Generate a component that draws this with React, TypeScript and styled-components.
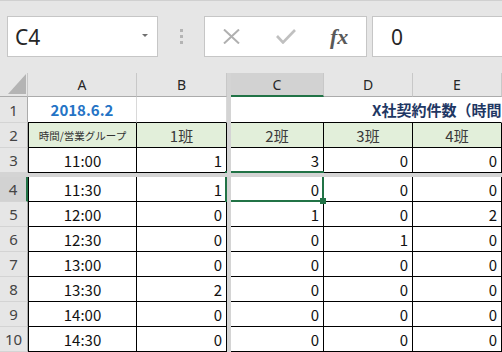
import React from 'react';
import styled, { createGlobalStyle } from 'styled-components';

const GREEN = '#217346';

const GlobalStyle = createGlobalStyle`
  html, body { margin: 0; padding: 0; }
  body {
    background: #e6e6e6;
    font-family: "Noto Sans CJK JP", "Noto Sans", sans-serif;
  }
  #root { width: 502px; height: 352px; overflow: hidden; }
`;

const Window = styled.div`
  width: 502px;
  height: 352px;
  display: flex;
  flex-direction: column;
  background: #e6e6e6;
  overflow: hidden;
`;

/* ---------- formula bar ---------- */

const FormulaBar = styled.div`
  flex: 0 0 73px;
  box-sizing: border-box;
  border-top: 1px solid #d0d0d0;
  padding: 15px 0 16px 7px;
  display: flex;
`;

const Box = styled.div`
  box-sizing: border-box;
  height: 41px;
  background: #fff;
  border: 1px solid #c6c6c6;
  display: flex;
  align-items: center;
`;

const NameBox = styled(Box)`
  width: 151px;
  padding: 0 9px 0 7px;
  font-family: "Noto Sans", sans-serif;
  font-size: 21px;
  color: #262626;
`;

const DropArrow = styled.span`
  margin-left: auto;
  margin-bottom: 3px;
  width: 0;
  height: 0;
  border-left: 3px solid transparent;
  border-right: 3px solid transparent;
  border-top: 3px solid #707070;
`;

const Grip = styled.div`
  width: 46px;
  display: flex;
  flex-direction: column;
  align-items: center;
  justify-content: center;
  gap: 3px;
`;

const GripDot = styled.span`
  width: 3px;
  height: 3px;
  background: #b4b4b4;
`;

const ActionBox = styled(Box)`
  width: 163px;
`;

const ActionButton = styled.div`
  flex: 1;
  height: 100%;
  display: flex;
  align-items: center;
  justify-content: center;
`;

const FxLabel = styled.span`
  font-family: "Liberation Serif", serif;
  font-style: italic;
  font-weight: bold;
  font-size: 22px;
  color: #595959;
`;

const FormulaInput = styled(Box)`
  flex: 1;
  margin: 0 -3px 0 5px;
  padding-left: 18px;
  font-family: "Noto Sans", sans-serif;
  font-size: 21px;
  color: #262626;
`;

/* ---------- sheet ---------- */

const Sheet = styled.div`
  position: relative;
  flex: 1;
  display: grid;
  grid-template-columns: 28px 109px 90px 4px 93px 89px 1fr;
  grid-template-rows: 24px 26px 25px 25px 4px repeat(7, 25px);
  background: #fff;
`;

const Corner = styled.div`
  box-sizing: border-box;
  background: #e6e6e6;
  border-right: 1px solid #c8c8c8;
  border-bottom: 1px solid #ababab;
  display: flex;
  align-items: flex-end;
  justify-content: flex-end;
  padding: 0 1px 2px 0;
`;

const CornerTriangle = styled.span`
  width: 0;
  height: 0;
  border-left: 18px solid transparent;
  border-bottom: 20px solid #b4b4b4;
`;

const ColHeader = styled.div<{ $active?: boolean }>`
  box-sizing: border-box;
  display: flex;
  align-items: center;
  justify-content: center;
  font-family: "Noto Sans", sans-serif;
  font-size: 14px;
  color: #262626;
  background: ${p => (p.$active ? '#d2d2d2' : '#e6e6e6')};
  border-right: 1px solid #c8c8c8;
  border-bottom: ${p => (p.$active ? `2px solid ${GREEN}` : '1px solid #ababab')};
`;

const RowHeader = styled.div<{ $active?: boolean }>`
  box-sizing: border-box;
  display: flex;
  align-items: center;
  justify-content: center;
  font-family: "Noto Sans", sans-serif;
  font-size: 15px;
  color: #444;
  background: ${p => (p.$active ? '#d2d2d2' : '#e6e6e6')};
  border-right: ${p => (p.$active ? `2px solid ${GREEN}` : '1px solid #ababab')};
  border-bottom: 1px solid #d4d4d4;
`;

type Edge = 'black' | 'grid' | 'none';
const line = (e?: Edge) => (e === 'black' ? '#000' : e === 'grid' ? '#d9d9d9' : 'transparent');

const Cell = styled.div<{
  $align?: 'left' | 'center' | 'right';
  $right?: Edge;
  $bottom?: Edge;
  $left?: Edge;
  $fill?: string;
  $span?: number;
}>`
  box-sizing: border-box;
  display: flex;
  align-items: center;
  justify-content: ${p => (p.$align === 'right' ? 'flex-end' : p.$align === 'left' ? 'flex-start' : 'center')};
  padding: 0 4px;
  font-size: 15px;
  color: #111;
  white-space: nowrap;
  overflow: hidden;
  background: ${p => p.$fill ?? '#fff'};
  border-right: 1px solid ${p => line(p.$right)};
  border-bottom: 1px solid ${p => line(p.$bottom)};
  border-left: ${p => (p.$left ? `1px solid ${line(p.$left)}` : 'none')};
  grid-column: ${p => (p.$span ? `span ${p.$span}` : 'auto')};
`;

const DateCell = styled(Cell)`
  font-weight: bold;
  color: #2473c5;
`;

const TitleCell = styled(Cell)`
  justify-content: flex-start;
  padding: 0 0 0 141px;
  font-weight: bold;
  color: #1f3864;
`;

const LabelCell = styled(Cell)`
  font-size: 10.5px;
  color: #333;
`;

const GroupCell = styled(Cell)`
  color: #3a3a3a;
`;

const FreezeCol = styled.div`
  grid-column: 4;
  grid-row: 1 / -1;
  background: #d4d4d4;
  z-index: 3;
`;

const FreezeRow = styled.div`
  grid-column: 1 / -1;
  grid-row: 5;
  background: #d4d4d4;
  z-index: 3;
`;

const Selection = styled.div`
  position: absolute;
  top: 98px;
  left: 225px;
  width: 99px;
  height: 31px;
  box-sizing: border-box;
  border: 2px solid ${GREEN};
  pointer-events: none;
  z-index: 2;
`;

const FillHandle = styled.span`
  position: absolute;
  right: -4px;
  bottom: -4px;
  width: 6px;
  height: 6px;
  background: ${GREEN};
`;

const GROUP_FILL = '#e2efda';

const data: [string, number, number, number, number][] = [
  ['11:00', 1, 3, 0, 0],
  ['11:30', 1, 0, 0, 0],
  ['12:00', 0, 1, 0, 2],
  ['12:30', 0, 0, 1, 0],
  ['13:00', 0, 0, 0, 0],
  ['13:30', 2, 0, 0, 0],
  ['14:00', 0, 0, 0, 0],
  ['14:30', 0, 0, 0, 0],
];

const DataRow: React.FC<{ row: number; values: [string, number, number, number, number] }> = ({ row, values }) => {
  const [time, ...nums] = values;
  return (
    <>
      <RowHeader $active={row === 4}>{row}</RowHeader>
      <Cell $left="black" $right="black" $bottom="black">{time}</Cell>
      {nums.map((n, i) => (
        <Cell key={i} $align="right" $right="black" $bottom="black">{n}</Cell>
      ))}
    </>
  );
};

export default function App() {
  return (
    <>
      <GlobalStyle />
      <Window>
        <FormulaBar>
          <NameBox>
            C4
            <DropArrow />
          </NameBox>
          <Grip>
            <GripDot />
            <GripDot />
            <GripDot />
          </Grip>
          <ActionBox>
            <ActionButton>
              <svg width="17" height="15" viewBox="0 0 17 15">
                <path d="M1 0.5 L16 14.5 M16 0.5 L1 14.5" stroke="#b0b0b0" strokeWidth="2" fill="none" />
              </svg>
            </ActionButton>
            <ActionButton>
              <svg width="20" height="15" viewBox="0 0 20 15">
                <path d="M1 7 L7 13.5 L19 1" stroke="#c0c0c0" strokeWidth="2.6" fill="none" />
              </svg>
            </ActionButton>
            <ActionButton>
              <FxLabel>fx</FxLabel>
            </ActionButton>
          </ActionBox>
          <FormulaInput>0</FormulaInput>
        </FormulaBar>

        <Sheet>
          <FreezeCol />
          <FreezeRow />

          <Corner>
            <CornerTriangle />
          </Corner>
          <ColHeader>A</ColHeader>
          <ColHeader>B</ColHeader>
          <ColHeader $active>C</ColHeader>
          <ColHeader>D</ColHeader>
          <ColHeader>E</ColHeader>

          <RowHeader>1</RowHeader>
          <DateCell $right="grid" $bottom="black">2018.6.2</DateCell>
          <Cell $right="grid" $bottom="black" />
          <TitleCell $span={3} $bottom="black">X社契約件数（時間</TitleCell>

          <RowHeader>2</RowHeader>
          <LabelCell $left="black" $right="black" $bottom="black" $fill={GROUP_FILL}>時間/営業グループ</LabelCell>
          {['1班', '2班', '3班', '4班'].map(g => (
            <GroupCell key={g} $right="black" $bottom="black" $fill={GROUP_FILL}>{g}</GroupCell>
          ))}

          <DataRow row={3} values={data[0]} />
          {data.slice(1).map((v, i) => (
            <DataRow key={i} row={i + 4} values={v} />
          ))}

          <Selection>
            <FillHandle />
          </Selection>
        </Sheet>
      </Window>
    </>
  );
}
